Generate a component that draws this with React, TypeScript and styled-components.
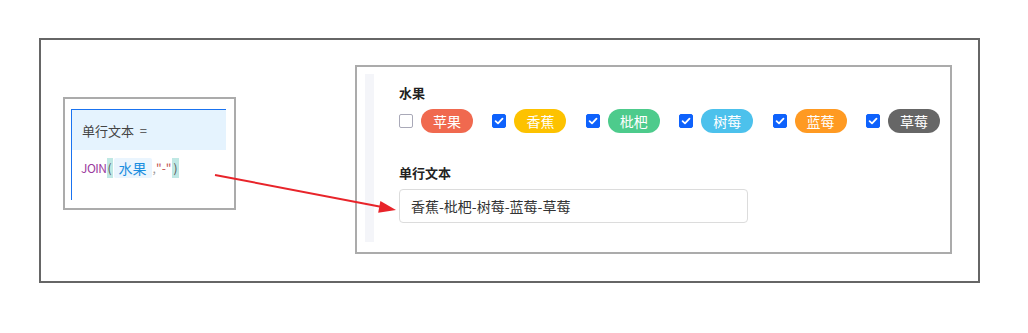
import React from "react";
import styled, { createGlobalStyle } from "styled-components";

const GlobalStyle = createGlobalStyle`
  html, body {
    margin: 0;
    padding: 0;
    background: #ffffff;
  }
  body {
    font-family: "Noto Sans CJK SC", "Noto Sans", sans-serif;
    color: #333333;
  }
`;

type fruit = {
  name: string;
  color: string;
  checked: boolean;
};

const fruits: fruit[] = [
  { name: "苹果", color: "#f0694f", checked: false },
  { name: "香蕉", color: "#fdc200", checked: true },
  { name: "枇杷", color: "#4dcb8c", checked: true },
  { name: "树莓", color: "#4cc1ec", checked: true },
  { name: "蓝莓", color: "#ff9a22", checked: true },
  { name: "草莓", color: "#666666", checked: true },
];

const CheckMark = () => (
  <svg width="10" height="10" viewBox="0 0 10 10">
    <path
      d="M1.6 5.2 L4 7.4 L8.5 2.6"
      fill="none"
      stroke="#ffffff"
      strokeWidth="1.8"
      strokeLinecap="round"
      strokeLinejoin="round"
    />
  </svg>
);

const Arrow = () => (
  <ArrowSvg>
    <line x1="174" y1="135" x2="341" y2="167" stroke="#e8242a" strokeWidth="2" />
    <polygon points="355,170 339.4,160.9 337.2,172.7" fill="#e8242a" />
  </ArrowSvg>
);

export default function App() {
  return (
    <>
      <GlobalStyle />
      <Frame>
        <FormulaCard>
          <Editor>
            <EditorHead>单行文本 &nbsp;=</EditorHead>
            <EditorBody>
              <Fn>JOIN</Fn>
              <Paren>(</Paren>
              <FieldChip>水果</FieldChip>
              <Plain>,</Plain>
              <Str>"-"</Str>
              <Paren>)</Paren>
            </EditorBody>
          </Editor>
        </FormulaCard>
        <FormPanel>
          <SideStrip />
          <Fields>
            <Label>水果</Label>
            <Options>
              {fruits.map((f) => (
                <Option key={f.name}>
                  <Box $checked={f.checked}>{f.checked && <CheckMark />}</Box>
                  <Tag $color={f.color}>{f.name}</Tag>
                </Option>
              ))}
            </Options>
            <Label $top={31}>单行文本</Label>
            <Input>香蕉-枇杷-树莓-蓝莓-草莓</Input>
          </Fields>
        </FormPanel>
        <Arrow />
      </Frame>
    </>
  );
}

const Frame = styled.div`
  position: relative;
  box-sizing: border-box;
  display: flex;
  align-items: flex-start;
  margin: 38px 0 0 39px;
  width: 941px;
  height: 245px;
  border: 2px solid #666666;
  padding-left: 22px;
`;

const ArrowSvg = styled.svg`
  position: absolute;
  left: 0;
  top: 0;
  width: 100%;
  height: 100%;
  pointer-events: none;
`;

const FormulaCard = styled.div`
  box-sizing: border-box;
  margin-top: 57px;
  width: 173px;
  height: 113px;
  border: 2px solid #ababab;
  padding: 10px 8px 8px 6px;
`;

const Editor = styled.div`
  height: 100%;
  border-top: 1px solid #1a73f0;
  border-left: 1px solid #1a73f0;
  box-sizing: border-box;
`;

const EditorHead = styled.div`
  height: 40px;
  background: #e5f3fe;
  display: flex;
  align-items: center;
  padding-left: 10px;
  font-size: 13px;
  color: #444444;
`;

const EditorBody = styled.div`
  display: flex;
  align-items: center;
  padding: 8px 0 0 9px;
  font-size: 12px;
  line-height: 20px;
`;

const Fn = styled.span`
  color: #9b3a9e;
  letter-spacing: -0.5px;
`;

const Paren = styled.span`
  background: #bfe8e4;
  color: #555555;
  padding: 0 1px;
`;

const FieldChip = styled.span`
  background: #eaf5fe;
  color: #1a8ee0;
  font-size: 14px;
  padding: 0 5px;
  margin: 0 1px;
  border-radius: 2px;
`;

const Plain = styled.span`
  color: #999999;
`;

const Str = styled.span`
  color: #c0504d;
  margin-right: 1px;
`;

const FormPanel = styled.div`
  box-sizing: border-box;
  display: flex;
  margin: 25px 0 0 119px;
  width: 597px;
  height: 189px;
  border: 2px solid #ababab;
  padding: 7px 8px 10px 8px;
`;

const SideStrip = styled.div`
  width: 9px;
  background: #f4f5f9;
  flex-shrink: 0;
`;

const Fields = styled.div`
  display: flex;
  flex-direction: column;
  padding: 10px 0 0 25px;
`;

const Label = styled.div<{ $top?: number }>`
  font-size: 13px;
  font-weight: bold;
  color: #222222;
  line-height: 18px;
  margin-top: ${(p) => p.$top ?? 0}px;
`;

const Options = styled.div`
  display: flex;
  align-items: center;
  gap: 19.4px;
  margin-top: 7px;
`;

const Option = styled.div`
  display: flex;
  align-items: center;
  gap: 8px;
`;

const Box = styled.span<{ $checked: boolean }>`
  box-sizing: border-box;
  width: 14px;
  height: 14px;
  border-radius: 2px;
  display: flex;
  align-items: center;
  justify-content: center;
  background: ${(p) => (p.$checked ? "#0e62fc" : "#ffffff")};
  border: 1px solid ${(p) => (p.$checked ? "#0e62fc" : "#a9a9b8")};
`;

const Tag = styled.span<{ $color: string }>`
  display: inline-flex;
  align-items: center;
  justify-content: center;
  height: 24px;
  width: 52px;
  border-radius: 12px;
  background: ${(p) => p.$color};
  color: #ffffff;
  font-size: 14px;
`;

const Input = styled.div`
  box-sizing: border-box;
  margin-top: 7px;
  width: 349px;
  height: 34px;
  border: 1px solid #dcdcdc;
  border-radius: 4px;
  display: flex;
  align-items: center;
  padding-left: 11px;
  font-size: 14px;
  color: #333333;
`;
